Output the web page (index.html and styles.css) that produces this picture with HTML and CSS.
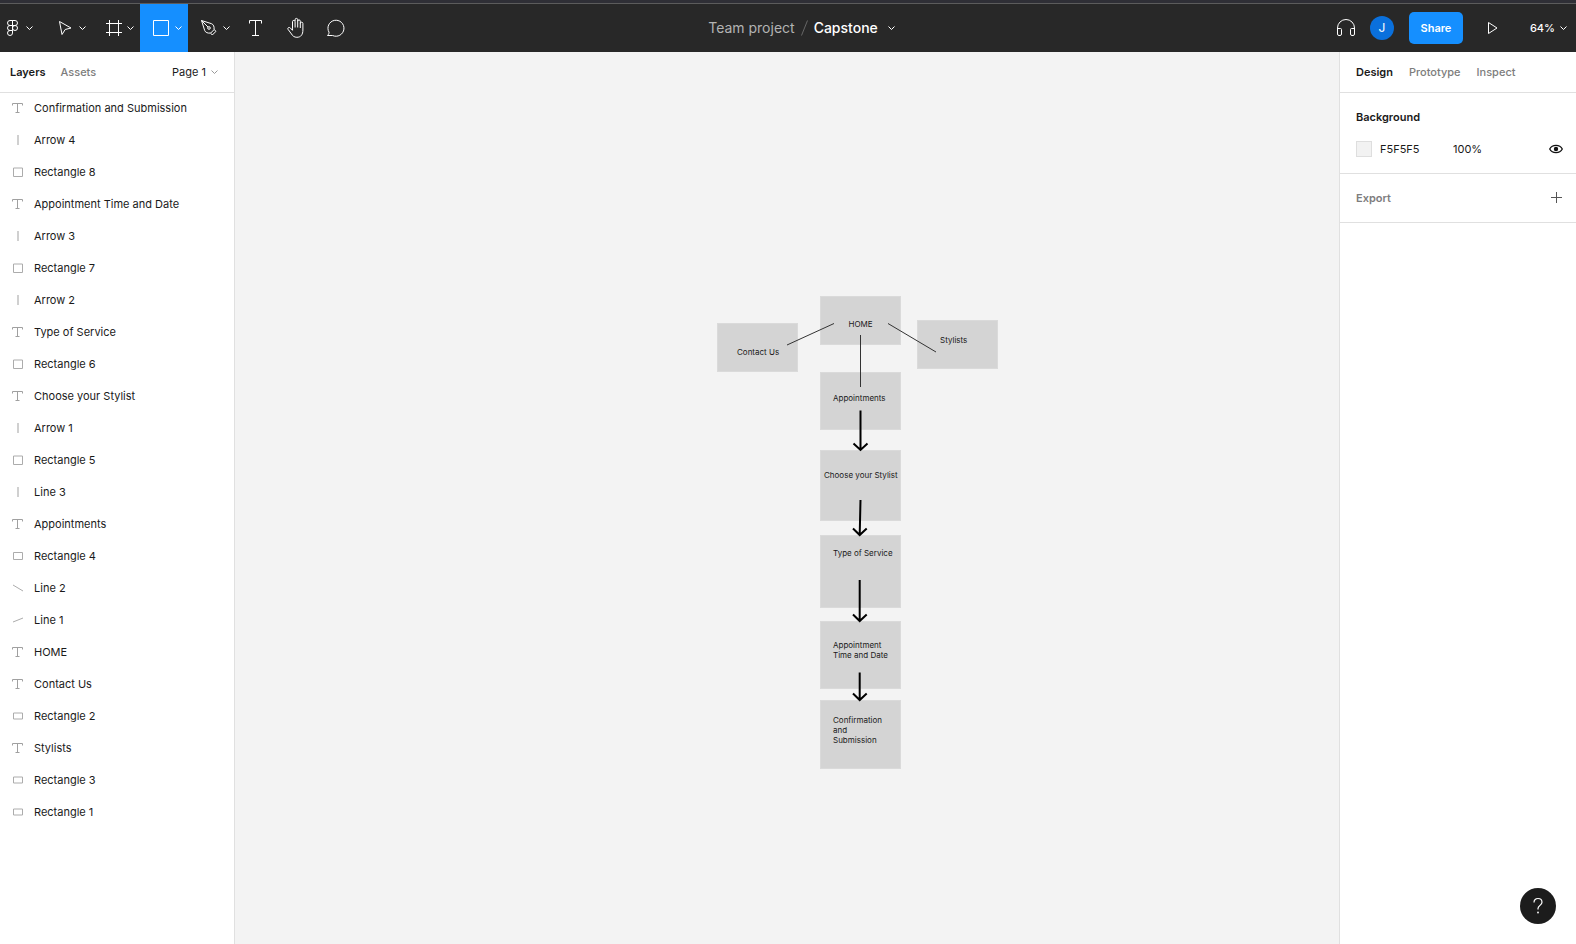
FILE: index.html
```html
<!DOCTYPE html>
<html lang="en">
<head>
<meta charset="utf-8">
<title>Capstone</title>
<link rel="stylesheet" href="styles.css">
</head>
<body>
<svg class="defs" aria-hidden="true">
  <symbol id="chev" viewBox="0 0 7 8"><path d="M.5 2.500l3 3 3-3" fill="none" stroke="currentColor"/></symbol>
  <symbol id="i-text" viewBox="0 0 12 12"><path d="M.5 3.500v-2h10v2M5.500 1.500v9M3.500 10.500h4" fill="none" stroke="#a0a0a0"/></symbol>
  <symbol id="i-arrow" viewBox="0 0 12 12"><path d="M6 1v10" fill="none" stroke="#d0d0d0" stroke-width="2"/></symbol>
  <symbol id="i-rect" viewBox="0 0 12 12"><path d="M1.500 2v8.500h9V2z" fill="none" stroke="#acacac"/></symbol>
  <symbol id="i-rect-m" viewBox="0 0 12 12"><path d="M1.500 2.500v7h9v-7z" fill="none" stroke="#acacac"/></symbol>
  <symbol id="i-rect-s" viewBox="0 0 12 12"><path d="M1.500 3v6h9V3z" fill="none" stroke="#acacac"/></symbol>
  <symbol id="i-down" viewBox="0 0 12 12"><path d="M1 3l10 6" fill="none" stroke="#acacac"/></symbol>
  <symbol id="i-up" viewBox="0 0 12 12"><path d="M1 8l10-4" fill="none" stroke="#acacac"/></symbol>
</svg>
<header class="toolbar">
  <nav class="tools" aria-label="Tools">
    <button class="tool menu" aria-label="Main menu">
      <svg class="icon" viewBox="0 0 24 24"><path d="M12.500 4.500H10a2.500 2.500 0 0 0 0 5h2.500zM12.500 4.500H15a2.500 2.500 0 0 1 0 5h-2.500zM12.500 9.500H10a2.500 2.500 0 0 0 0 5h2.500zM12.500 14.500H10a2.500 2.500 0 1 0 2.500 2.500z"/><circle cx="15" cy="12" r="2.500"/></svg>
      <svg class="chev"><use href="#chev"/></svg>
    </button>
    <button class="tool" aria-label="Move">
      <svg class="icon" viewBox="0 0 24 24"><path d="M6.500 5.500l11.500 6.500-5.800 1.500-3.200 5z"/></svg>
      <svg class="chev"><use href="#chev"/></svg>
    </button>
    <button class="tool" aria-label="Frame">
      <svg class="icon" viewBox="0 0 24 24"><path d="M8.500 4v16M17.500 4v16M5 7.500h16M5 16.500h16"/></svg>
      <svg class="chev"><use href="#chev"/></svg>
    </button>
    <button class="tool active" aria-label="Rectangle" aria-pressed="true">
      <svg class="icon" viewBox="0 0 24 24"><path d="M4.500 4.500h15v15h-15z"/></svg>
      <svg class="chev"><use href="#chev"/></svg>
    </button>
    <button class="tool" aria-label="Pen">
      <svg class="icon" viewBox="0 0 24 24"><path d="M4.500 4.500l10 3.200c2 .8 3 3 2.500 6l-3.300 3.300c-3 .5-5.200-.5-6-2.500zM4.500 4.500l6.500 6.500M13.700 17.200l1.600 1.800 3.700-3.700-1.800-1.600"/><circle cx="12" cy="12" r="1.300"/></svg>
      <svg class="chev"><use href="#chev"/></svg>
    </button>
    <button class="tool single" aria-label="Text">
      <svg class="icon" viewBox="0 0 24 24"><path d="M5.500 7.500v-3h12v3M11.500 4.500v15M8 19.500h7"/></svg>
    </button>
    <button class="tool single" aria-label="Hand">
      <svg class="icon" viewBox="0 0 24 24"><path d="M8.500 12.500V5.700a1.300 1.300 0 0 1 2.600 0v5.800M11.100 5V3.700a1.300 1.300 0 0 1 2.600 0v7.800M13.700 5.200a1.300 1.300 0 0 1 2.600 0v6.800M16.300 7.500a1.300 1.300 0 0 1 2.600 0V14c0 4.500-2 7.300-6 7.300-2.600 0-4.300-1.300-5.400-3.300L4 13.300c-.8-1.500 1.200-2.600 2.400-1.300l2.100 2.300v-2"/></svg>
    </button>
    <button class="tool single" aria-label="Comment">
      <svg class="icon" viewBox="0 0 24 24"><path d="M3.500 19.500c1.200-1.300 1.600-2 1.500-3.300a8 8 0 1 1 3.600 3.300z"/></svg>
    </button>
  </nav>
  <div class="title">
    <a class="project" href="#">Team project</a>
    <svg class="slash" viewBox="0 0 7 16"><path d="M.5 15.500l6-15" fill="none" stroke="#666"/></svg>
    <button class="file">Capstone <svg class="chev"><use href="#chev"/></svg></button>
  </div>
  <div class="actions">
    <button class="plain" aria-label="Audio"><svg class="icon" viewBox="0 0 24 24"><path d="M3.500 15.500V12a8.500 8.500 0 0 1 17 0v3.500M3.500 12.500h3a1 1 0 0 1 1 1V18a1.500 1.500 0 0 1-1.500 1.500H5A1.500 1.500 0 0 1 3.500 18zM20.500 12.500h-3a1 1 0 0 0-1 1V18a1.500 1.500 0 0 0 1.500 1.500h1a1.500 1.500 0 0 0 1.500-1.500z"/></svg></button>
    <span class="avatar">J</span>
    <button class="share">Share</button>
    <button class="plain play" aria-label="Present"><svg class="icon" viewBox="0 0 24 24"><path d="M7.500 6.500v11l8.500-5.500z"/></svg></button>
    <button class="zoom">64% <svg class="chev"><use href="#chev"/></svg></button>
  </div>
</header>
<main class="workspace">
  <aside class="panel left">
    <div class="tabs">
      <button class="tab current">Layers</button>
      <button class="tab">Assets</button>
      <button class="page">Page 1 <svg class="chev"><use href="#chev"/></svg></button>
    </div>
    <ul class="layers">
      <li><svg><use href="#i-text"/></svg>Confirmation and Submission</li>
      <li><svg><use href="#i-arrow"/></svg>Arrow 4</li>
      <li><svg><use href="#i-rect"/></svg>Rectangle 8</li>
      <li><svg><use href="#i-text"/></svg>Appointment Time and Date</li>
      <li><svg><use href="#i-arrow"/></svg>Arrow 3</li>
      <li><svg><use href="#i-rect"/></svg>Rectangle 7</li>
      <li><svg><use href="#i-arrow"/></svg>Arrow 2</li>
      <li><svg><use href="#i-text"/></svg>Type of Service</li>
      <li><svg><use href="#i-rect"/></svg>Rectangle 6</li>
      <li><svg><use href="#i-text"/></svg>Choose your Stylist</li>
      <li><svg><use href="#i-arrow"/></svg>Arrow 1</li>
      <li><svg><use href="#i-rect"/></svg>Rectangle 5</li>
      <li><svg><use href="#i-arrow"/></svg>Line 3</li>
      <li><svg><use href="#i-text"/></svg>Appointments</li>
      <li><svg><use href="#i-rect-m"/></svg>Rectangle 4</li>
      <li><svg><use href="#i-down"/></svg>Line 2</li>
      <li><svg><use href="#i-up"/></svg>Line 1</li>
      <li><svg><use href="#i-text"/></svg>HOME</li>
      <li><svg><use href="#i-text"/></svg>Contact Us</li>
      <li><svg><use href="#i-rect-s"/></svg>Rectangle 2</li>
      <li><svg><use href="#i-text"/></svg>Stylists</li>
      <li><svg><use href="#i-rect-s"/></svg>Rectangle 3</li>
      <li><svg><use href="#i-rect-s"/></svg>Rectangle 1</li>
    </ul>
  </aside>
  <section class="canvas" aria-label="Canvas">
    <div class="node home">HOME</div>
    <div class="node contact">Contact Us</div>
    <div class="node stylists">Stylists</div>
    <div class="node appointments">Appointments</div>
    <div class="node choose">Choose your Stylist</div>
    <div class="node service">Type of Service</div>
    <div class="node date">Appointment<br>Time and Date</div>
    <div class="node confirm">Confirmation<br>and<br>Submission</div>
    <svg class="links" viewBox="0 0 300 500">
      <g stroke="#333" fill="none"><path d="M80 61l47-21.500M181 39.500l48 28.500M153.500 51v52"/></g>
      <g stroke="#000" stroke-width="2" fill="none">
        <path d="M153.500 126.500V166M146.500 159.500l7 6.500 7-6.500"/>
        <path d="M153.500 216l-.8 35M146 244.500l6.700 6.500 7-6.500"/>
        <path d="M152.700 296v41M146 330.500l6.700 6.500 7-6.500"/>
        <path d="M152.700 388.500V416M146 409.500l6.700 6.500 7-6.500"/>
      </g>
    </svg>
  </section>
  <aside class="panel right">
    <div class="tabs">
      <button class="tab current">Design</button>
      <button class="tab">Prototype</button>
      <button class="tab">Inspect</button>
    </div>
    <section class="section">
      <h2>Background</h2>
      <div class="fill">
        <span class="swatch"></span>
        <input class="hex" aria-label="Background color" value="F5F5F5">
        <input class="opacity" aria-label="Opacity" value="100%">
        <button class="plain eye" aria-label="Toggle visibility"><svg viewBox="0 0 14 10"><path d="M.7 5C3.300.1 10.700.1 13.300 5 10.700 9.900 3.300 9.900.7 5z" fill="none" stroke="#111" stroke-width="1.300"/><circle cx="7" cy="5" r="2.200" fill="#111"/></svg></button>
      </div>
    </section>
    <section class="section export">
      <h2>Export</h2>
      <button class="plain" aria-label="Add export"><svg class="plus" viewBox="0 0 12 12"><path d="M5.500 0v11M0 5.500h11" stroke="#555"/></svg></button>
    </section>
  </aside>
</main>
<button class="help" aria-label="Help"><svg viewBox="0 0 12 18"><path d="M2 5.500C2 3 3.700 1.500 6 1.500s4 1.500 4 3.700c0 3-4 3.300-4 6.300v1" fill="none" stroke="#fff" stroke-width="1.200"/><circle cx="6" cy="15.500" r=".9" fill="#fff"/></svg></button>
</body>
</html>
```

FILE: styles.css
```css
* { box-sizing: border-box; }
body {
  margin: 0;
  height: 100vh;
  display: flex;
  flex-direction: column;
  font: 11px/16px Inter, sans-serif;
  color: #1a1a1a;
  overflow: hidden;
}
button, input { font: inherit; color: inherit; background: none; border: 0; padding: 0; margin: 0; }
svg { display: block; flex: none; }
.defs { position: absolute; width: 0; height: 0; }
.chev { width: 7px; height: 8px; }
.plain { display: flex; }

.toolbar {
  flex: none;
  height: 52px;
  border-top: 3px solid #2f2f36;
  box-shadow: inset 0 1px #5c5c5c;
  padding-top: 1px;
  background: #282828;
  color: #fff;
  display: grid;
  grid-template-columns: 1fr auto 1fr;
}
.icon { width: 24px; height: 24px; fill: none; stroke: currentColor; stroke-linejoin: round; }
.tools { display: flex; }
.tool { width: 48px; display: flex; align-items: center; gap: 2px; padding-left: 9px; }
.tool.menu { width: 44px; padding-left: 0; }
.tool.active { background: #158fff; }
.tool.single { width: 40px; padding-left: 8px; }
.title { display: flex; align-items: center; gap: 6px; padding-left: 27px; font-size: 14px; }
.project { color: #b3b3b3; text-decoration: none; }
.slash { width: 7px; height: 16px; }
.file { display: flex; align-items: center; gap: 10px; font-weight: 500; }
.actions { display: flex; align-items: center; justify-content: flex-end; padding-right: 9px; }
.avatar {
  width: 24px; height: 24px; margin: 0 15px 0 12px;
  border-radius: 50%; background: #0a70dc;
  line-height: 24px; text-align: center; font-size: 12px;
}
.share { width: 54px; height: 32px; border-radius: 5px; background: #158fff; font-weight: 600; }
.play { margin: 0 25px 0 18px; }
.zoom { display: flex; align-items: center; gap: 5px; font-weight: 500; }

.workspace { flex: 1; min-height: 0; display: flex; }
.panel { flex: none; background: #fff; }
.left { width: 235px; border-right: 1px solid #e0e0e0; }
.right { width: 237px; border-left: 1px solid #e0e0e0; }
.tabs { height: 40px; display: flex; align-items: center; gap: 16px; padding: 0 16px 0 10px; box-shadow: 0 1px #e0e0e0; }
.left .tabs { gap: 15px; }
.right .tabs { padding-left: 16px; }
.tab { color: #7d7d7d; font-weight: 500; }
.tab.current { color: #1a1a1a; font-weight: 600; }
.page { display: flex; align-items: center; gap: 5px; margin-left: auto; }
.page .chev { color: #999; }
.layers { list-style: none; margin: 0; padding: 0; }
.layers li { height: 32px; display: flex; align-items: center; gap: 10px; padding-left: 12px; }
.layers svg { width: 12px; height: 12px; }

.section { padding: 17px 13px 16px 16px; border-bottom: 1px solid #e0e0e0; }
.section h2 { margin: 0; font-size: 11px; font-weight: 600; }
.fill { display: flex; align-items: center; margin-top: 16px; }
.swatch { width: 16px; height: 16px; margin-right: 8px; background: #f2f2f2; border: 1px solid #dedede; }
.hex { width: 73px; }
.opacity { width: 60px; }
.eye { margin-left: auto; }
.eye svg { width: 14px; height: 10px; }
.export { display: flex; align-items: center; justify-content: space-between; padding-top: 16px; padding-bottom: 16px; }
.export h2 { color: #7d7d7d; }
.plus { width: 12px; height: 12px; }

.canvas { flex: 1; position: relative; overflow: hidden; background: #f3f3f3; }
.node {
  position: absolute;
  left: 585px;
  width: 81px;
  padding-left: 13px;
  background: #d4d4d4;
  box-shadow: inset 0 0 0 1px #dadada;
  font-size: 8px;
  line-height: 10px;
  white-space: nowrap;
}
.home { top: 244px; height: 49px; padding: 23px 0 0; text-align: center; }
.contact { left: 482px; top: 271px; height: 49px; padding: 24px 0 0 20px; }
.stylists { left: 682px; top: 268px; height: 49px; padding: 15px 0 0 23px; }
.appointments { top: 320px; height: 58px; padding-top: 21px; }
.choose { top: 398px; height: 71px; padding: 20px 0 0 4px; }
.service { top: 483px; height: 73px; padding-top: 13px; }
.date { top: 569px; height: 68px; padding-top: 19px; }
.confirm { top: 648px; height: 69px; padding-top: 15px; }
.links { position: absolute; left: 472px; top: 232px; width: 300px; height: 500px; }

.help {
  position: absolute; right: 20px; bottom: 20px;
  width: 36px; height: 36px; border-radius: 50%;
  background: #1c1c1c;
  display: flex; align-items: center; justify-content: center;
}
.help svg { width: 12px; height: 18px; }
```
